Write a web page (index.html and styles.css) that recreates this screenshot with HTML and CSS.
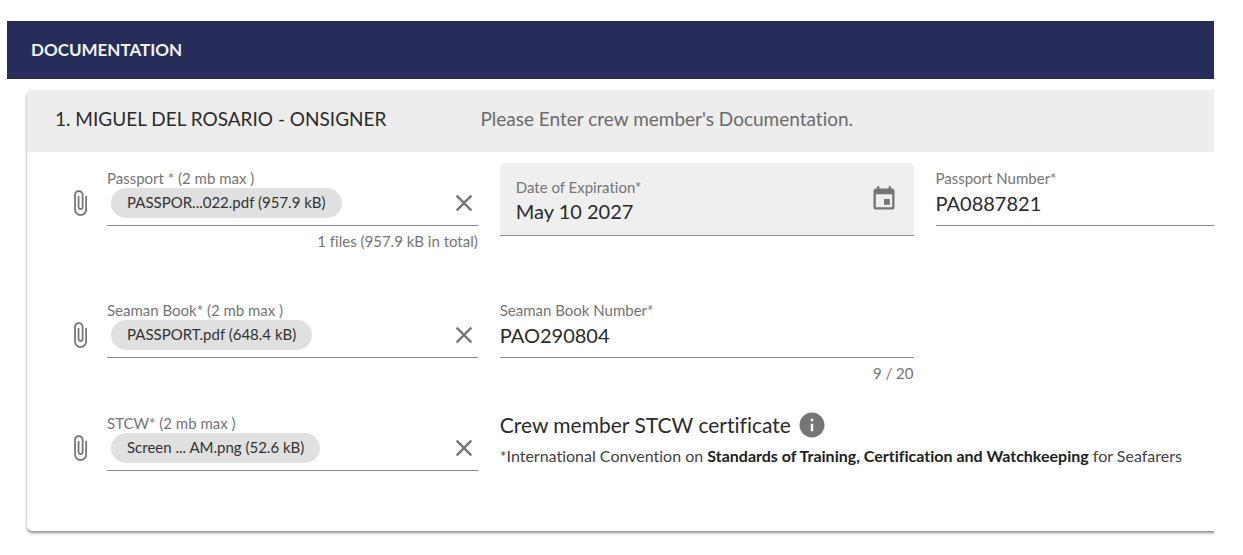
FILE: index.html
```html
<!DOCTYPE html>
<html lang="en">
    <head>
        <title>Documentation</title>
        <meta charset="utf-8" />
        <meta name="viewport" content="width=device-width, initial-scale=1" />
        <link rel="stylesheet" href="styles.css">
    </head>
    <body>
        <svg width="0" height="0" class="sprite">
            <symbol id="icon-clip" viewBox="0 0 24 24">
                <path d="M16.5 6v11.5c0 2.21-1.79 4-4 4s-4-1.79-4-4V5c0-1.38 1.12-2.5 2.5-2.5s2.5 1.12 2.5 2.5v10.5c0 .55-.45 1-1 1s-1-.45-1-1V6H10v9.5c0 1.38 1.12 2.5 2.5 2.5s2.5-1.12 2.5-2.5V5c0-2.21-1.79-4-4-4S7 2.79 7 5v12.500c0 3.040 2.460 5.500 5.500 5.500s5.500-2.460 5.500-5.500V6h-1.500z"/>
            </symbol>
            <symbol id="icon-close" viewBox="0 0 24 24">
                <path d="M19 6.410L17.590 5 12 10.590 6.410 5 5 6.410 10.590 12 5 17.590 6.410 19 12 13.410 17.590 19 19 17.590 13.410 12z"/>
            </symbol>
            <symbol id="icon-event" viewBox="0 0 24 24">
                <path d="M17 12h-5v5h5v-5zM16 1v2H8V1H6v2H5c-1.110 0-1.990.9-1.990 2L3 19c0 1.100.89 2 2 2h14c1.100 0 2-.9 2-2V5c0-1.100-.9-2-2-2h-1V1h-2zm3 18H5V8h14v11z"/>
            </symbol>
            <symbol id="icon-info" viewBox="0 0 24 24">
                <path d="M12 2C6.480 2 2 6.480 2 12s4.480 10 10 10 10-4.480 10-10S17.520 2 12 2zm1 15h-2v-6h2v6zm0-8h-2V7h2v2z"/>
            </symbol>
        </svg>

        <div id="app">
            <h1 class="bar">DOCUMENTATION</h1>
            <section class="card">
                <header class="card-header">
                    <h2>1. MIGUEL DEL ROSARIO - ONSIGNER</h2>
                    <p>Please Enter crew member's Documentation.</p>
                </header>

                <form class="card-body">
                    <div class="row">
                        <div class="file-field">
                            <svg class="icon clip"><use href="#icon-clip"/></svg>
                            <div class="field">
                                <label for="passport">Passport * (2 mb max )</label>
                                <input type="file" id="passport" hidden>
                                <div class="control">
                                    <span class="chip">PASSPOR...022.pdf (957.9 kB)</span>
                                    <button type="button" class="clear" aria-label="Clear passport"><svg class="icon"><use href="#icon-close"/></svg></button>
                                </div>
                                <div class="hint">1 files (957.9 kB in total)</div>
                            </div>
                        </div>
                        <div class="date-field">
                            <div class="date-text">
                                <label for="expiration">Date of Expiration*</label>
                                <input type="text" id="expiration" value="May 10 2027">
                            </div>
                            <button type="button" aria-label="Open calendar"><svg class="icon"><use href="#icon-event"/></svg></button>
                        </div>
                        <div class="field">
                            <label for="passportNumber">Passport Number*</label>
                            <div class="control">
                                <input type="text" id="passportNumber" value="PA0887821">
                            </div>
                        </div>
                    </div>

                    <div class="row row-short">
                        <div class="file-field">
                            <svg class="icon clip"><use href="#icon-clip"/></svg>
                            <div class="field">
                                <label for="seamanBook">Seaman Book* (2 mb max )</label>
                                <input type="file" id="seamanBook" hidden>
                                <div class="control">
                                    <span class="chip">PASSPORT.pdf (648.4 kB)</span>
                                    <button type="button" class="clear" aria-label="Clear seaman book"><svg class="icon"><use href="#icon-close"/></svg></button>
                                </div>
                            </div>
                        </div>
                        <div class="field">
                            <label for="seamanNumber">Seaman Book Number*</label>
                            <div class="control">
                                <input type="text" id="seamanNumber" maxlength="20" value="PAO290804">
                            </div>
                            <div class="hint">9 / 20</div>
                        </div>
                    </div>

                    <div class="row">
                        <div class="file-field">
                            <svg class="icon clip"><use href="#icon-clip"/></svg>
                            <div class="field">
                                <label for="stcw">STCW* (2 mb max )</label>
                                <input type="file" id="stcw" hidden>
                                <div class="control">
                                    <span class="chip">Screen ... AM.png (52.6 kB)</span>
                                    <button type="button" class="clear" aria-label="Clear STCW"><svg class="icon"><use href="#icon-close"/></svg></button>
                                </div>
                            </div>
                        </div>
                        <div class="note">
                            <h3>Crew member STCW certificate <svg class="icon"><use href="#icon-info"/></svg></h3>
                            <p>*International Convention on <strong>Standards of Training, Certification and Watchkeeping</strong> for Seafarers</p>
                        </div>
                    </div>
                </form>
            </section>
        </div>
    </body>
</html>
```
FILE: styles.css
```css
* {
    box-sizing: border-box;
}

body {
    margin: 0;
    font-family: Lato, "Noto Sans", sans-serif;
    font-size: 15px;
    font-variant-ligatures: none;
    line-height: 20px;
    color: #2b2b2b;
    background-color: #fff;
}

h1, h2, h3, p {
    margin: 0;
    font-weight: normal;
}

.sprite {
    display: none;
}

/* the card runs past the right edge and is cut there */
#app {
    margin: 21px 29px 0 7px;
    padding-bottom: 8px;
    overflow: hidden;
}

.bar {
    padding: 14px 24px;
    font-size: 17px;
    line-height: 30px;
    font-weight: bold;
    color: #f2f2f7;
    background-color: #272d5b;
}

.card {
    margin: 11px -8px 0 20px;
    padding-right: 8px;
    border-radius: 5px;
    box-shadow: 0 2px 3px rgba(0, 0, 0, 0.45);
}

.card-header {
    display: flex;
    gap: 94px;
    margin-right: -8px;
    padding: 14px 28px 18px;
    font-size: 19px;
    line-height: 30px;
    border-radius: 5px 5px 0 0;
    background-color: #ededed;
}

.card-header h2 {
    font-size: 19px;
}

.card-header p {
    color: #6b6b6b;
}

.card-body {
    padding: 11px 0 0 37px;
}

.row {
    display: grid;
    grid-template-columns: 52fr 52fr 35fr;
    align-items: start;
    gap: 22px;
    min-height: 132px;
    color: #757575;
}

.row-short {
    min-height: 113px;
}

.row:last-child {
    min-height: 123px;
}

.icon {
    display: block;
    width: 28px;
    height: 28px;
    fill: currentColor;
}

.file-field {
    display: flex;
}

.clip {
    flex: none;
    margin: 26px 13px 0 2px;
}

.field {
    flex: 1;
    padding-top: 5px;
}

label {
    display: block;
}

.control {
    display: flex;
    align-items: center;
    justify-content: space-between;
    height: 38px;
    padding-bottom: 7px;
    border-bottom: 1px solid #8c8c8c;
}

.chip {
    margin-left: 4px;
    padding: 4px 16px 6px;
    border-radius: 15px;
    color: #333;
    background-color: #e0e0e0;
}

input {
    display: block;
    width: 100%;
    padding: 0;
    border: none;
    outline: none;
    font: inherit;
    font-size: 20px;
    line-height: 28px;
    color: #2b2b2b;
    background: none;
}

input[hidden] {
    display: none;
}

button {
    padding: 0;
    border: none;
    color: inherit;
    background: none;
    cursor: pointer;
}

.hint {
    margin-top: 5px;
    text-align: right;
}

.date-field {
    display: flex;
    align-items: center;
    height: 73px;
    padding: 0 16px;
    border-bottom: 1px solid #8c8c8c;
    border-radius: 5px 5px 0 0;
    background-color: #efefef;
}

.date-text {
    flex: 1;
    padding-top: 3px;
}

.note {
    grid-column: span 2;
    padding-top: 2px;
    color: #424242;
}

.note h3 {
    display: flex;
    align-items: center;
    gap: 6px;
    font-size: 21px;
    line-height: 30px;
    color: #2b2b2b;
}

.note h3 .icon {
    width: 30px;
    height: 30px;
    color: #757575;
}

.note p {
    margin-top: 6px;
    font-size: 16px;
}

.note strong {
    color: #212121;
}
```
